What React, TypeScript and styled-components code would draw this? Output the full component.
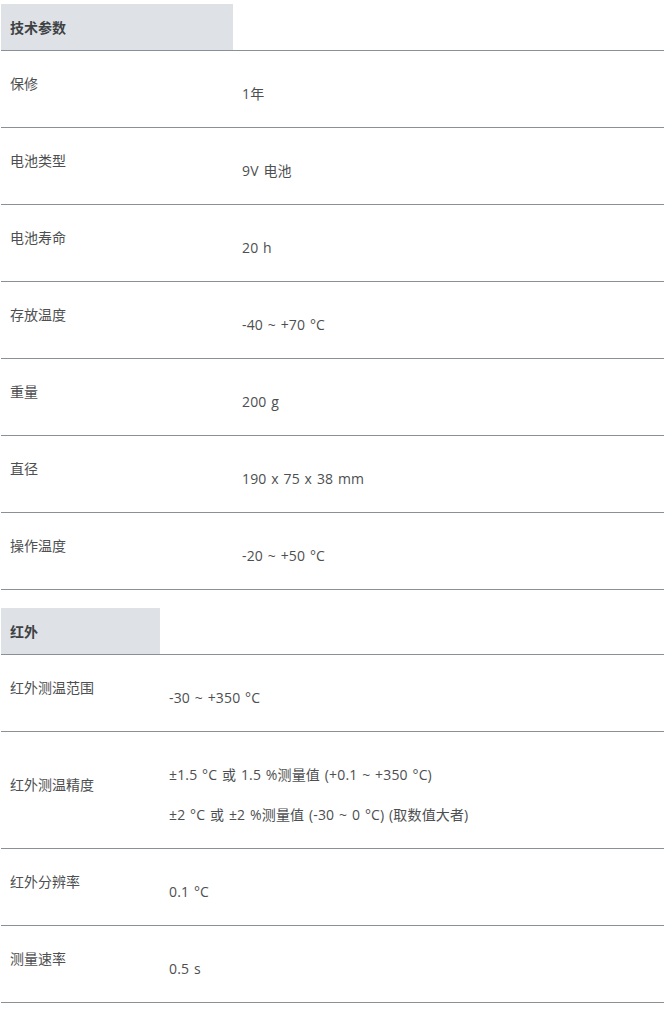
import styled, { createGlobalStyle } from 'styled-components';

const GlobalStyle = createGlobalStyle`
	body {
		margin: 0;
		background: #fff;
		font-family: 'Open Sans', 'Noto Sans CJK SC', sans-serif;
		font-size: 14px;
		color: #4d4f51;
	}
`;

type Spec = { label: string; values: string[] };

const general: Spec[] = [
	{ label: '保修', values: ['1年'] },
	{ label: '电池类型', values: ['9V 电池'] },
	{ label: '电池寿命', values: ['20 h'] },
	{ label: '存放温度', values: ['-40 ~ +70 °C'] },
	{ label: '重量', values: ['200 g'] },
	{ label: '直径', values: ['190 x 75 x 38 mm'] },
	{ label: '操作温度', values: ['-20 ~ +50 °C'] },
];

const infrared: Spec[] = [
	{ label: '红外测温范围', values: ['-30 ~ +350 °C'] },
	{
		label: '红外测温精度',
		values: ['±1.5 °C 或 1.5 %测量值 (+0.1 ~ +350 °C)', '±2 °C 或 ±2 %测量值 (-30 ~ 0 °C) (取数值大者)'],
	},
	{ label: '红外分辨率', values: ['0.1 °C'] },
	{ label: '测量速率', values: ['0.5 s'] },
];

export default function App() {
	return (
		<>
			<GlobalStyle />
			<Page>
				<SpecTable title='技术参数' labelWidth={232} rows={general} />
				<SpecTable title='红外' labelWidth={159} rows={infrared} />
			</Page>
		</>
	);
}

function SpecTable({ title, labelWidth, rows }: { title: string; labelWidth: number; rows: Spec[] }) {
	return (
		<Section>
			<HeadRow>
				<Heading $width={labelWidth}>{title}</Heading>
			</HeadRow>
			{rows.map((row) => (
				<Row key={row.label} $labelWidth={labelWidth}>
					<Label>{row.label}</Label>
					<Values>
						{row.values.map((v) => (
							<Value key={v}>{v}</Value>
						))}
					</Values>
				</Row>
			))}
		</Section>
	);
}

const Page = styled.div`
	padding: 4px 5px 0 1px;
	display: flex;
	flex-direction: column;
	gap: 18px;
`;

const Section = styled.section`
	display: flex;
	flex-direction: column;
`;

const HeadRow = styled.div`
	display: flex;
	border-bottom: 1px solid #8a9196;
`;

const Heading = styled.div<{ $width: number }>`
	width: ${({ $width }) => $width}px;
	height: 46px;
	box-sizing: border-box;
	display: flex;
	align-items: center;
	padding-left: 9px;
	background: #dee2e6;
	font-weight: 700;
	color: #3e4245;
`;

const Row = styled.div<{ $labelWidth: number }>`
	display: grid;
	grid-template-columns: ${({ $labelWidth }) => $labelWidth}px 1fr;
	align-items: center;
	padding: 23px 0;
	border-bottom: 1px solid #8a9196;
`;

const Label = styled.div`
	padding: 0 9px 10px;
	line-height: 20px;
`;

const Values = styled.div`
	padding: 10px 9px 0;
	display: flex;
	flex-direction: column;
	gap: 20px;
	letter-spacing: 0.15px;
	word-spacing: 1px;
`;

const Value = styled.p`
	margin: 0;
	line-height: 20px;
`;
